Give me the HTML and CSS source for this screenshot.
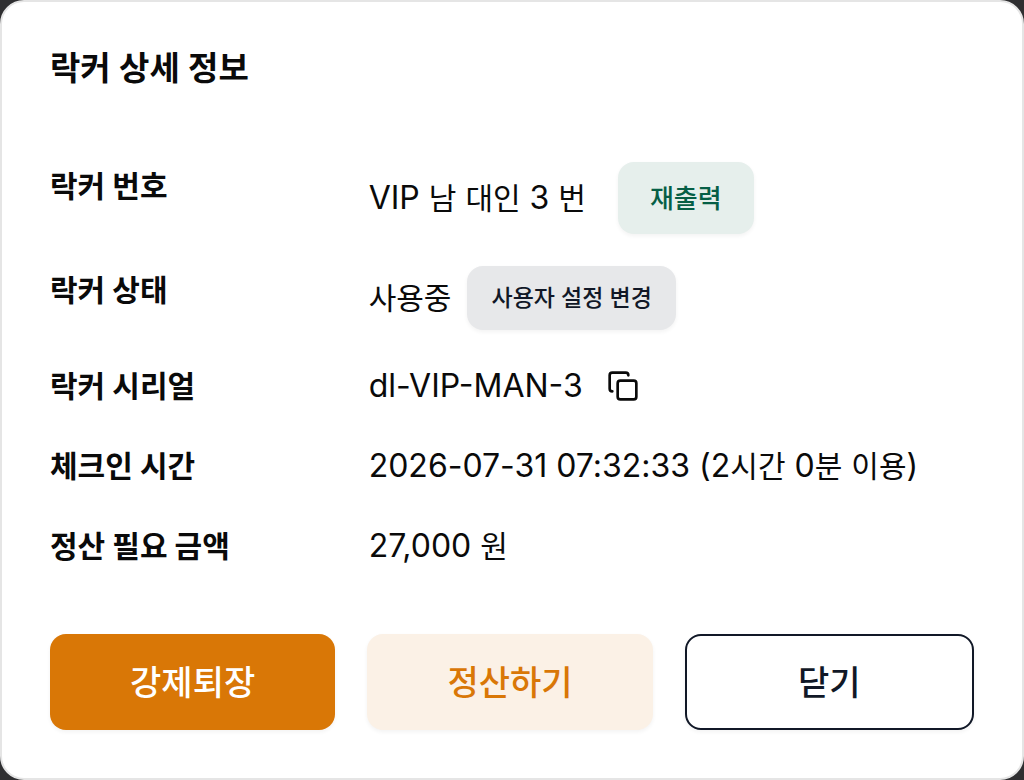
FILE: index.html
```html
<!DOCTYPE html>
<html lang="ko">
<head>
    <meta charset="UTF-8">
    <meta name="viewport" content="width=device-width, initial-scale=1.0">
    <title>락커 상세 정보</title>
    <link rel="stylesheet" href="styles.css">
</head>
<body>

<main class="dialog">
    <h2 class="dialog-title">락커 상세 정보</h2>

    <dl class="details">
        <div class="row">
            <dt>락커 번호</dt>
            <dd class="number">
                <div>VIP <span class="ko">남</span> <span class="ko">대인</span> 3 <span class="ko">번</span></div>
                <button type="button" class="btn reprint">재출력</button>
            </dd>
        </div>
        <div class="row">
            <dt>락커 상태</dt>
            <dd class="status">
                <span class="ko">사용중</span>
                <button type="button" class="btn change">사용자 설정 변경</button>
            </dd>
        </div>
        <div class="row">
            <dt>락커 시리얼</dt>
            <dd class="serial">
                <div>dl-VIP-MAN-3</div>
                <button type="button" class="copy" aria-label="복사">
                    <svg viewBox="0 0 24 24" width="32" height="32" fill="none" stroke="currentColor" stroke-width="2" stroke-linecap="round" stroke-linejoin="round">
                        <rect x="8" y="8" width="14" height="14" rx="2"/>
                        <path d="M4 16c-1.1 0-2-.9-2-2V4c0-1.1.9-2 2-2h10c1.1 0 2 .9 2 2"/>
                    </svg>
                </button>
            </dd>
        </div>
        <div class="row">
            <dt>체크인 시간</dt>
            <dd>
                <div>2026-07-31 07:32:33 (2<span class="ko">시간</span> 0<span class="ko">분</span> <span class="ko">이용</span>)</div>
            </dd>
        </div>
        <div class="row">
            <dt>정산 필요 금액</dt>
            <dd>
                <div>27,000 <span class="ko">원</span></div>
            </dd>
        </div>
    </dl>

    <div class="actions">
        <button type="button" class="btn force">강제퇴장</button>
        <button type="button" class="btn settle">정산하기</button>
        <button type="button" class="btn close">닫기</button>
    </div>
</main>

</body>
</html>
```

FILE: styles.css
```css
* {
    box-sizing: border-box;
}
body {
    margin: 0;
    background: #2f2f31;
    color: #0a0a0a;
    font-family: Inter, "Noto Sans CJK KR", sans-serif;
    font-size: 32px;
    line-height: 48px;
}
.dialog {
    min-height: 100vh;
    padding: 48px;
    background: white;
    border: 2px solid #e5e5e5;
    border-radius: 24px;
}
.dialog-title {
    margin: 0 0 76px;
    font-size: 33px;
    font-weight: 600;
    line-height: 36px;
}
.details {
    display: flex;
    flex-direction: column;
    gap: 32px;
    margin: 0 0 64px;
}
.row {
    display: grid;
    grid-template-columns: 1fr 2fr;
    gap: 16px;
}
.row dt {
    font-size: 30px;
    font-weight: 700;
}
.row dd {
    display: flex;
    align-items: center;
    margin: 0;
}
/* hangul runs wide next to Inter */
.ko {
    font-size: 30px;
    line-height: 1;
}
.number {
    gap: 32px;
}
.status {
    gap: 16px;
}
.serial {
    gap: 24px;
}
.btn {
    padding: 0 32px 4px;
    font-family: inherit;
    font-weight: 500;
    border: none;
    border-radius: 16px;
    box-shadow: 0 2px 4px rgba(0, 0, 0, 0.05);
    cursor: pointer;
}
.reprint {
    height: 72px;
    font-size: 26px;
    background: #e6efec;
    color: #065f46;
}
.change {
    height: 64px;
    padding: 0 24px 4px;
    font-size: 23px;
    background: #e7e8ea;
    color: #111827;
}
.copy {
    display: flex;
    padding: 0;
    border: none;
    background: none;
    color: inherit;
    cursor: pointer;
}
.actions {
    display: flex;
    gap: 32px;
}
.actions .btn {
    flex: 1;
    height: 96px;
    font-size: 34px;
}
.force {
    background: #d97706;
    color: white;
}
.settle {
    background: #fbf1e6;
    color: #d97706;
}
.actions .close {
    background: white;
    border: 2px solid #111827;
    color: #111827;
}
```
